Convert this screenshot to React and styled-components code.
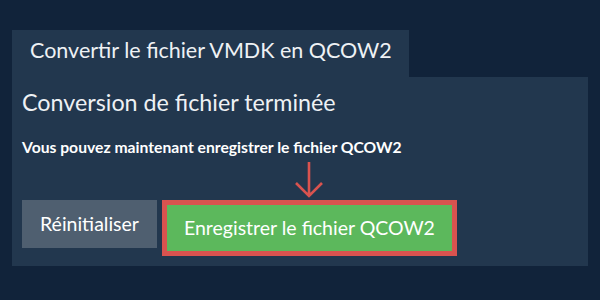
import React from "react";
import styled, { createGlobalStyle } from "styled-components";

const GlobalStyle = createGlobalStyle`
  html, body {
    margin: 0;
    padding: 0;
    background: #11233a;
    font-family: Lato, "Open Sans", sans-serif;
    color: #ffffff;
  }
`;

const Page = styled.div`
  width: 600px;
  height: 300px;
  box-sizing: border-box;
  padding: 30px 12px 0 12px;
`;

const Tab = styled.div`
  display: inline-block;
  background: #22374e;
  font-size: 21.5px;
  line-height: 1.2;
  padding: 8px 17px 13px 18px;
  color: #eef1f4;
`;

const Panel = styled.div`
  background: #22374e;
  padding: 12px 10px 10px 10px;
`;

const Heading = styled.h2`
  margin: 0;
  font-size: 23.3px;
  font-weight: 400;
  line-height: 27px;
  color: #eef1f4;
`;

const Notice = styled.p`
  margin: 22px 0 0 0;
  font-size: 15.7px;
  font-weight: 700;
  line-height: 19px;
`;

const Actions = styled.div`
  display: grid;
  grid-template-columns: auto auto;
  justify-content: start;
  align-items: start;
  column-gap: 5px;
  margin-top: 5px;
`;

const ArrowSlot = styled.div`
  grid-column: 2;
  justify-self: center;
  height: 38px;
`;

const Button = styled.button`
  font-family: inherit;
  font-size: 19.5px;
  color: #ffffff;
  border: ${(p) => (p.primary ? "5px solid #d9534f" : "none")};
  background: ${(p) => (p.primary ? "#5cb85c" : "#4f5f70")};
  height: ${(p) => (p.primary ? "56px" : "48px")};
  box-sizing: border-box;
  padding: ${(p) => (p.primary ? "0 17px" : "0 18px")};
  cursor: pointer;
`;

const ArrowDown = () => (
  <svg width="30" height="38" viewBox="0 0 30 38" style={{ display: "block" }}>
    <path
      d="M15 0 V34 M2 21 L15 34 L28 21"
      fill="none"
      stroke="#d9534f"
      strokeWidth="2.6"
    />
  </svg>
);

export default function App() {
  return (
    <>
      <GlobalStyle />
      <Page>
        <Tab>Convertir le fichier VMDK en QCOW2</Tab>
        <Panel>
          <Heading>Conversion de fichier terminée</Heading>
          <Notice>Vous pouvez maintenant enregistrer le fichier QCOW2</Notice>
          <Actions>
            <ArrowSlot>
              <ArrowDown />
            </ArrowSlot>
            <Button>Réinitialiser</Button>
            <Button primary>Enregistrer le fichier QCOW2</Button>
          </Actions>
        </Panel>
      </Page>
    </>
  );
}
